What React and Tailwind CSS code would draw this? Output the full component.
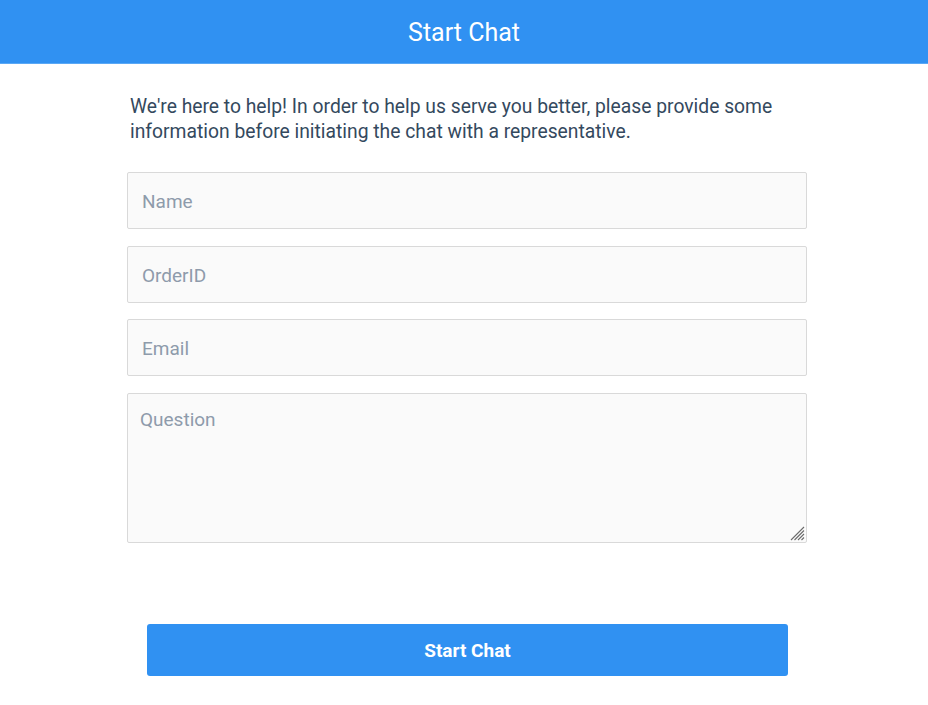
export default function App() {
  const font = { fontFamily: 'Roboto, "Liberation Sans", sans-serif' };
  const inputCls =
    "h-[57px] w-full rounded-[2px] border border-[#d9d9d9] bg-[#fafafa] px-[14px] pt-[2px] text-[19px] text-[#34495e] outline-none placeholder:text-[#8e9bab]";
  return (
    <div className="min-h-[705px] w-[928px] bg-white" style={font}>
      <div className="flex h-16 items-center justify-center border-b border-[#5aa8f5] bg-[#3091f2]">
        <h1 className="pt-[3px] text-[25px] font-normal text-white">Start Chat</h1>
      </div>
      <div className="ml-[127px] w-[680px] pt-[30px]">
        <p className="pl-[3px] text-[19.3px] leading-[25px] text-[#34495e]">
          We're here to help! In order to help us serve you better, please provide some information before initiating the chat with a representative.
        </p>
        <form className="mt-[28px] flex flex-col">
          <input placeholder="Name" className={inputCls} />
          <input placeholder="OrderID" className={"mt-[17px] " + inputCls} />
          <input placeholder="Email" className={"mt-[16px] " + inputCls} />
          <div className="relative mt-[17px] h-[150px] w-full">
            <textarea
              placeholder="Question"
              className="block h-[150px] w-full resize-none rounded-[2px] border border-[#d9d9d9] bg-[#fafafa] px-[12px] pt-[13px] pb-[12px] text-[19px] leading-[26px] text-[#34495e] outline-none placeholder:text-[#8e9bab]"
            />
            <svg
              className="pointer-events-none absolute bottom-[2px] right-[2px]"
              width="15"
              height="15"
              viewBox="0 0 15 15"
            >
              <g stroke="#6b6b6b" strokeWidth="1.1">
                <line x1="1" y1="14" x2="14" y2="1" />
                <line x1="4.5" y1="14" x2="14" y2="4.5" />
                <line x1="8" y1="14" x2="14" y2="8" />
                <line x1="11.5" y1="14" x2="14" y2="11.5" />
              </g>
            </svg>
          </div>
        </form>
        <div className="mt-[81px] flex pl-[20px]">
          <button className="h-[52px] w-[641px] rounded-[3px] bg-[#3091f2] pt-[3px] text-[19px] font-bold text-white">
            Start Chat
          </button>
        </div>
      </div>
    </div>
  );
}
